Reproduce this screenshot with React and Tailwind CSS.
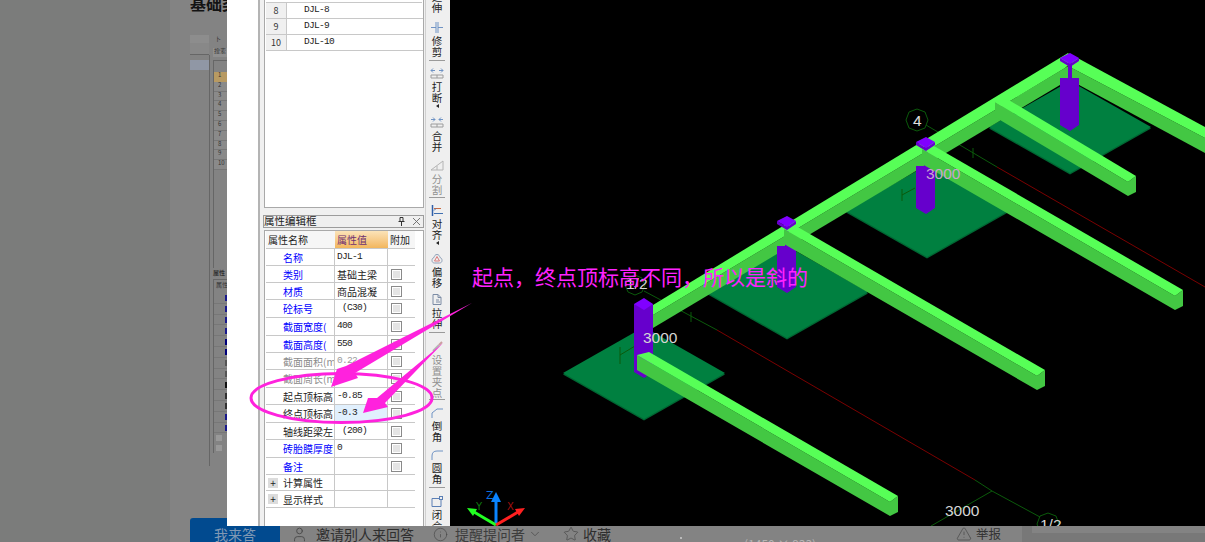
import { ChevronDown, Info, Star, TriangleAlert, User } from "lucide-react";

const MONO = "font-['Liberation_Mono',monospace] text-[9.5px] tracking-[-0.7px]";

const listRows = [
  { no: "8", name: "DJL-8" },
  { no: "9", name: "DJL-9" },
  { no: "10", name: "DJL-10" },
];

const propRows = [
  { h: "h-[17px]", label: "名称", color: "text-[#0000ff]", value: "DJL-1", mono: true },
  { h: "h-[17px]", label: "类别", color: "text-[#0000ff]", value: "基础主梁", check: true },
  { h: "h-[17px]", label: "材质", color: "text-[#0000ff]", value: "商品混凝", check: true },
  { h: "h-[18px]", label: "砼标号", color: "text-[#0000ff]", value: " (C30)", mono: true, check: true },
  { h: "h-[18px]", label: "截面宽度(", color: "text-[#0000ff]", value: "400", mono: true, check: true },
  { h: "h-[17px]", label: "截面高度(", color: "text-[#0000ff]", value: "550", mono: true, check: true },
  { h: "h-[17px]", label: "截面面积(m", color: "text-[#8c8c8c]", value: "0.22", mono: true, gray: true, check: true },
  { h: "h-[18px]", label: "截面周长(m", color: "text-[#8c8c8c]", value: "1.9", mono: true, gray: true, check: true },
  { h: "h-[17px]", label: "起点顶标高", color: "text-[#222]", value: "-0.85", mono: true, check: true },
  { h: "h-[18px]", label: "终点顶标高", color: "text-[#222]", value: "-0.3", mono: true, active: true, check: true },
  { h: "h-[17px]", label: "轴线距梁左", color: "text-[#222]", value: " (200)", mono: true, check: true },
  { h: "h-[18px]", label: "砖胎膜厚度", color: "text-[#0000ff]", value: "0", mono: true, check: true },
  { h: "h-[17px]", label: "备注", color: "text-[#0000ff]", value: "", check: true },
  { h: "h-[16px]", label: "计算属性", color: "text-[#222]", value: "", plus: true },
  { h: "h-[17px]", label: "显示样式", color: "text-[#222]", value: "", plus: true },
];

const thumbMarks = [
  "#1a1a8c", "#1a1a8c", "#1a1a8c", "#1a1a8c", "#00007a", "#00007a", "#555", "#555",
  "#111", "#333", "#333", "#1a1a8c", "#1a1a8c",
];

function Icon({ children, gray }) {
  return (
    <svg
      viewBox="0 0 14 11"
      className={`w-[14px] h-[11px] shrink-0 ${gray ? "text-[#b4b4b4]" : "text-[#6f93c4]"}`}
      fill="none"
      stroke="currentColor"
      strokeWidth="1"
    >
      {children}
    </svg>
  );
}

function Tool({ chars, icon, gray, arrow, mt }) {
  return (
    <div className={`flex flex-col items-center shrink-0 ${mt}`}>
      {icon && <Icon gray={gray}>{icon}</Icon>}
      <div className={`mt-[2px] flex flex-col items-center text-[10.5px] leading-[11px] ${gray ? "text-[#8f8f8f]" : "text-[#222]"}`}>
        {chars.split("").map((c, i) => (
          <span key={i}>{c}</span>
        ))}
      </div>
      {arrow && <span className="mt-[1px] w-0 h-0 border-y-[2px] border-y-transparent border-r-[3px] border-r-[#222]" />}
    </div>
  );
}

function Divider({ mt }) {
  return <div className={`w-[16px] h-px bg-[#9a9a9a] shrink-0 ${mt}`} />;
}

function Toolbar() {
  return (
    <div className="w-[25px] h-full bg-[#efefef] border-l border-[#d0d0d0] pr-[2px] flex flex-col items-center overflow-hidden shrink-0">
      <div className="-mt-[9px] flex flex-col items-center text-[10.5px] leading-[11px] text-[#222] shrink-0">
        <span>延</span>
        <span>伸</span>
      </div>
      <Tool
        chars="修剪"
        mt="mt-[9px]"
        icon={<><path d="M6 0v11M8 0v11" /><path d="M1 5.500h5M8 5.500h5" /></>}
      />
      <Divider mt="mt-[3px]" />
      <Tool
        chars="打断"
        arrow
        mt="mt-[7px]"
        icon={<><path d="M5 2.500H1M3 .5l-2 2 2 2M9 2.500h4M11 .5l2 2-2 2" /><path d="M1 7h12v3H1zM7 7v3" stroke="#9c9c9c" /></>}
      />
      <Tool
        chars="合并"
        mt="mt-[9px]"
        icon={<><path d="M1 2.500h4M3 .5l2 2-2 2M13 2.500H9M11 .5l-2 2 2 2" /><path d="M1 7h12v3H1zM7 7v3" stroke="#9c9c9c" /></>}
      />
      <Tool
        chars="分割"
        gray
        mt="mt-[8px]"
        icon={<><path d="M1 10h12v-9L1 10z" /><path d="M7 10V6" /></>}
      />
      <Divider mt="mt-[2px]" />
      <Tool
        chars="对齐"
        arrow
        mt="mt-[7px]"
        icon={<><path d="M2.500 0v11" stroke="#2f5fa8" strokeWidth="1.500" /><path d="M4 3.500h7" stroke="#c9693f" /><path d="M4 5.500l2-2M4 8.500h9" stroke="#3f6fb0" /></>}
      />
      <Tool
        chars="偏移"
        mt="mt-[8px]"
        icon={<><path d="M7 1.500c2 0 2.500 1.500 3 3 1.500.5 2 1.500 2 3 0 1.500-1 2.500-2.500 2.500h-5C3 10 2 9 2 7.500c0-1.500.5-2.500 2-3 .5-1.500 1-3 3-3z" stroke="#8fa0b8" /><path d="M7 3.500l2.500 4.500h-5z" stroke="#d97a7a" /></>}
      />
      <Tool
        chars="拉伸"
        mt="mt-[6px]"
        icon={<><path d="M3 .5h5l3 3v7H3z" stroke="#7c8ca5" /><path d="M8 .5v3h3M6 6h3M6 8h4" stroke="#7c8ca5" /></>}
      />
      <Divider mt="mt-[3px]" />
      <Tool
        chars="设置夹点"
        gray
        mt="mt-[8px]"
        icon={<><path d="M3 10l6-6" strokeWidth="2" /><path d="M9 4l3-3" stroke="#c9a0a0" strokeWidth="2" /></>}
      />
      <Divider mt="mt-[1px]" />
      <Tool chars="倒角" mt="mt-[7px]" icon={<path d="M2 11V6l5-4h6" />} />
      <Tool chars="圆角" mt="mt-[7px]" icon={<path d="M2 11V7q0-5 5-5h6" />} />
      <Divider mt="mt-[3px]" />
      <Tool
        chars="闭合"
        mt="mt-[8px]"
        icon={<><path d="M2 2.500h8M2 2.500v8h9V4" stroke="#5b7fb5" /><rect x="9.500" y=".5" width="3" height="3" stroke="#5b7fb5" /></>}
      />
    </div>
  );
}

function ListPanel() {
  return (
    <div className="h-[208px] mr-px border-x border-b border-[#a9a9a9] bg-white pl-[1px] shrink-0 overflow-hidden">
      <div className="h-[2px] border-b border-[#c8c8c8] mr-px box-content" />
      {listRows.map((row) => (
        <div key={row.no} className="h-[16px] flex items-stretch border-b border-[#c8c8c8]">
          <div className="w-[21px] bg-[#f0f0f0] border-r border-[#c8c8c8] flex items-center justify-center text-[#333] text-[9px]">
            {row.no}
          </div>
          <div className={`pl-[17px] flex items-center text-[#222] ${MONO}`}>{row.name}</div>
        </div>
      ))}
    </div>
  );
}

function PropertyTable() {
  return (
    <div className="mt-[2px] flex-1 mr-px border-x border-t border-[#a9a9a9] bg-white pl-[1px]">
      <div className="w-[149px] flex h-[18px] border-b border-[#c8c8c8] text-[10px] text-[#222]">
        <div className="w-[69px] bg-[#f6f6f6] pl-[2px] flex items-center">属性名称</div>
        <div className="w-[53px] bg-gradient-to-b from-[#fbe3b8] to-[#f2b65c] text-[#6d2f73] pl-[2px] flex items-center">属性值</div>
        <div className="w-[27px] bg-[#f6f6f6] pl-[2px] flex items-center">附加</div>
      </div>
      {propRows.map((row) => (
        <div key={row.label} className={`w-[149px] flex border-b border-[#c8c8c8] text-[10px] ${row.h}`}>
          <div className={`w-[69px] border-r border-[#c8c8c8] flex items-center overflow-hidden whitespace-nowrap ${row.color} ${row.plus ? "pl-[2px]" : "pl-[17px]"}`}>
            {row.plus && (
              <span className="w-[10px] h-[10px] mr-[5px] bg-[#dcdcdc] flex items-center justify-center text-[#222] text-[10px] leading-none shrink-0">+</span>
            )}
            {row.label}
          </div>
          <div
            className={`w-[53px] border-r border-[#c8c8c8] pl-[2px] flex items-center whitespace-pre overflow-hidden ${row.mono ? MONO : ""} ${row.gray ? "text-[#9a9a9a]" : "text-[#222]"} ${row.active ? "bg-[#e1f0fd]" : ""}`}
          >
            {row.value}
          </div>
          <div className="w-[27px] flex items-center pl-[3px]">
            {row.check && <span className="w-[11px] h-[11px] border border-[#8a8a8a] bg-[#e4e4e4] ring-1 ring-inset ring-white" />}
          </div>
        </div>
      ))}
    </div>
  );
}

function EditorPane() {
  return (
    <div className="w-[167px] h-full bg-[#f0f0f0] border-l-2 border-[#b4b4b4] pl-[4px] flex flex-col shrink-0">
      <ListPanel />
      <div className="mt-[7px] -ml-px h-[13px] mr-px border border-[#9c9c9c] bg-[#efefef] flex items-center text-[10.5px] text-[#222] shrink-0">
        <span className="flex-1 leading-none">属性编辑框</span>
        <svg viewBox="0 0 7 9" className="w-[7px] h-[9px] mr-[8px]" fill="none" stroke="#333" strokeWidth="1">
          <path d="M2 .5h3v4H2zM.5 4.500h6M3.500 4.500V9" />
        </svg>
        <svg viewBox="0 0 7 7" className="w-[7px] h-[7px] mr-[3px]" fill="none" stroke="#666" strokeWidth="0.9">
          <path d="M0 0l7 7M7 0L0 7" />
        </svg>
      </div>
      <PropertyTable />
    </div>
  );
}

function Beam({ x, y, dx, dy }) {
  // 梁的顶面和侧面，起点是靠轴网一端
  const top = `${x},${y} ${x + 12},${y - 3} ${x + dx + 8},${y + dy - 6} ${x + dx},${y + dy}`;
  const side = `${x},${y} ${x + dx},${y + dy} ${x + dx + 8},${y + dy - 6} ${x + dx + 8},${y + dy + 10} ${x + dx},${y + dy + 14} ${x},${y + 15}`;
  return (
    <g>
      <polygon points={side} fill="#43c743" />
      <polygon points={top} fill="#57ff57" />
    </g>
  );
}

function Footing({ cx, cy }) {
  const pts = (d) => `${cx - 81},${cy + d} ${cx},${cy - 46 + d} ${cx + 81},${cy + d} ${cx},${cy + 46 + d}`;
  return (
    <g>
      <polygon points={pts(1.5)} fill="#006633" />
      <polygon points={pts(0)} fill="#008040" />
    </g>
  );
}

function Column({ x, capTop, neckEnd, bodyEnd }) {
  return (
    <g>
      <polygon
        points={`${x - 10},${neckEnd} ${x + 9},${neckEnd} ${x + 9},${bodyEnd} ${x},${bodyEnd + 6} ${x - 10},${bodyEnd}`}
        fill="#6600cc"
      />
      <rect x={x - 2} y={capTop + 8} width="4" height={neckEnd - capTop - 8} fill="#6600cc" />
    </g>
  );
}

function Cap({ x, y }) {
  return (
    <g>
      <polygon points={`${x - 10},${y + 5} ${x},${y + 11} ${x + 9},${y + 5} ${x + 9},${y + 8} ${x},${y + 14} ${x - 10},${y + 8}`} fill="#6600cc" />
      <polygon points={`${x - 10},${y + 5} ${x},${y} ${x + 9},${y + 5} ${x},${y + 11}`} fill="#8000ff" />
    </g>
  );
}

function CadCanvas() {
  return (
    <div className="flex-1 h-full bg-black overflow-hidden">
      <svg viewBox="450 0 755 526" className="w-full h-full block">
        {/* 独立基础 */}
        <Footing cx={644} cy={373} />
        <Footing cx={787} cy={292} />
        <Footing cx={927} cy={211} />
        <Footing cx={1070} cy={127} />

        {/* 轴线 */}
        <g fill="none" strokeWidth="1">
          <path d="M926 125L997 167" stroke="#0b5a0b" />
          <path d="M997 167L1205 287" stroke="#7a0000" />
          <path d="M644 291L717 330" stroke="#0b5a0b" />
          <path d="M717 330L975 480" stroke="#7a0000" />
          <path d="M975 480L992 491L1040 517M992 491L931 526" stroke="#0b5a0b" />
          <path d="M691 312V322M620 347V364M620 355L640 343M902 189V201M902 195L915 188M973 148V158" stroke="#0b5a0b" />
          <polygon points="917,109 925,112 928,120 925,128 917,131 909,128 906,120 909,112" stroke="#0b5a0b" />
          <polygon points="635,275 642,278 645,285 642,292 635,295 628,292 625,285 628,278" stroke="#0b5a0b" />
          <polygon points="1048,513 1056,516 1059,524 1056,532 1048,535 1040,532 1037,524 1040,516" stroke="#0b5a0b" />
        </g>

        {/* 主梁 */}
        <polygon points="653,315 1070,65 1070,79 653,328" fill="#43c743" />
        <polygon points="653,305 1068,53 1074,60 1065,68 653,315" fill="#57ff57" />
        <polygon points="1068,66 1205,138 1205,153 1068,79" fill="#43c743" />
        <polygon points="1072,55 1205,127 1205,138 1068,66" fill="#57ff57" />

        {/* 柱 */}
        <Column x={644} capTop={298} neckEnd={304} bodyEnd={372} />
        <polygon points="634,304 644,298 653,304 644,310" fill="#8000ff" />
        <Column x={787} capTop={216} neckEnd={246} bodyEnd={287} />
        <Column x={926} capTop={137} neckEnd={166} bodyEnd={208} />
        <Column x={1070} capTop={53} neckEnd={78} bodyEnd={125} />

        {/* 次梁 */}
        <Beam x={637} y={355} dx={253} dy={147} />
        <Beam x={784} y={229} dx={253} dy={147} />
        <Beam x={922} y={149} dx={253} dy={147} />
        <Beam x={995} y={102} dx={133} dy={80} />

        <Cap x={787} y={216} />
        <Cap x={926} y={137} />
        <Cap x={1070} y={53} />

        {/* 标注 */}
        <g className="font-['Liberation_Sans',sans-serif]" fontSize="15.5">
          <text x="643" y="343" fill="#d6d6d6">3000</text>
          <text x="926" y="179" fill="#c9a6d0">3000</text>
          <text x="945" y="516" fill="#d6d6d6">3000</text>
          <text x="913" y="126" fill="#e0e0e0">4</text>
          <text x="626" y="289" fill="#d6d6d6">1/2</text>
          <text x="1040" y="530" fill="#d6d6d6">1/2</text>
        </g>

        {/* 坐标轴 */}
        <g strokeWidth="3" fill="none">
          <path d="M496 525V500" stroke="#0a84ff" />
          <path d="M496 525L474 512" stroke="#22ff22" />
          <path d="M496 525L518 512" stroke="#ff2020" />
        </g>
        <polygon points="496,492 491,502 501,502" fill="#0a84ff" />
        <polygon points="467,508 477,509 473,516" fill="#22ff22" />
        <polygon points="525,508 515,509 519,516" fill="#ff2020" />
        <g className="font-['DejaVu_Sans',sans-serif]" fontSize="10">
          <text x="486" y="499" fill="#0a6fe0" fontSize="11">Z</text>
          <text x="476" y="510" fill="#0f7a0f">Y</text>
          <text x="507" y="510" fill="#a01010">X</text>
        </g>
      </svg>
    </div>
  );
}

function Thumbnail() {
  return (
    <div className="h-[431px] flex text-[6px] leading-none text-[#333] overflow-hidden shrink-0">
      <div className="w-[19px] shrink-0">
        <div className="h-[8px] bg-[#8d8d8d]" />
        <div className="h-[12px] bg-[#888] border-b border-[#666]" />
        <div className="h-[5px]" />
        <div className="h-[10px] bg-[#9097a5]" />
      </div>
      <div className="w-px bg-[#666] mt-[20px] shrink-0" />
      <div className="w-[3px] shrink-0" />
      <div className="flex-1 min-w-0">
        <div className="h-[13px] pl-[2px] pt-[1px]">卜</div>
        <div className="h-[9px] bg-[#8f8f8f] pl-[1px] whitespace-nowrap">搜索</div>
        <div className="mt-[3px] h-[208px] border-l border-t border-[#666] overflow-hidden">
          <div className="h-[11px]" />
          <div className="h-[9.800px] bg-[#b89a62] pl-[4px]">1</div>
          {["2", "3", "4", "5", "6", "7", "8", "9", "10"].map((n) => (
            <div key={n} className="h-[9.800px] bg-[#8a8a8a] border-b border-[#777] pl-[4px]">{n}</div>
          ))}
        </div>
        <div className="mt-[2px] h-[7px] font-bold whitespace-nowrap">属性</div>
        <div className="mt-[2px] border-l border-t border-[#666] pt-[2px]">
          <div className="h-[11px] pl-[2px] whitespace-nowrap">属性</div>
          {thumbMarks.map((c, i) => (
            <div key={i} className="h-[10.800px] border-b border-[#777] flex items-center pl-[11px] pt-px">
              <span className="w-[3px] h-[6px] shrink-0" style={{ backgroundColor: c }} />
            </div>
          ))}
          <div className="h-[10px] flex items-center pl-[2px]"><span className="w-[6px] h-[6px] bg-[#999]" /></div>
          <div className="h-[10px] flex items-center pl-[2px]"><span className="w-[6px] h-[6px] bg-[#999]" /></div>
        </div>
      </div>
    </div>
  );
}

function ActionBar() {
  return (
    <div className="h-[24px] flex items-end shrink-0 text-[14px] text-[#2e2e2e] whitespace-nowrap">
      <div className="w-[90px] h-[24px] pt-[9px] bg-[#014a8f] rounded-t-[3px] flex items-center justify-center text-[#8098b4] shrink-0">我来答</div>
      <div className="h-[16px] flex items-center">
        <User size={17} strokeWidth={1.2} className="ml-[11px] text-[#444] shrink-0" />
        <span className="ml-[8px]">邀请别人来回答</span>
        <Info size={15} strokeWidth={1} className="ml-[19px] text-[#444] shrink-0" />
        <span className="ml-[7px] text-[#3d3d3d]">提醒提问者</span>
        <ChevronDown size={14} strokeWidth={1.3} className="ml-[3px] text-[#4a4a4a] shrink-0" />
        <Star size={16} strokeWidth={1} className="ml-[21px] text-[#444] shrink-0" />
        <span className="ml-[4px]">收藏</span>
        <span className="ml-[69px] w-[2px] h-[2px] mt-[8px] bg-[#bbb] shrink-0" />
        <span className="ml-[62px] mt-[20px] text-[12px] text-[#b5b5b5]">(1450 × 833)</span>
        <TriangleAlert size={16} strokeWidth={1} className="ml-[140px] text-[#444] shrink-0" />
        <span className="ml-[4px] text-[12.500px] text-[#333]">举报</span>
      </div>
    </div>
  );
}

function Annotations() {
  return (
    <svg viewBox="0 0 1205 542" className="absolute inset-0 w-full h-full pointer-events-none">
      <ellipse cx="341.500" cy="398" rx="90.500" ry="24.500" fill="none" stroke="#ff22dd" strokeWidth="3" />
      <polygon points="472,303 346,366 337,369 331,387 358,378 355,373" fill="#ff22dd" />
      <polygon points="443,343 377,398 368,398 363,413 388,407 385,403" fill="#ff22dd" />
      <text x="472" y="285" fontSize="21" fill="#ff22ff" className="font-['Noto_Sans_CJK_SC',sans-serif]">
        起点，终点顶标高不同，所以是斜的
      </text>
    </svg>
  );
}

export default function App() {
  return (
    <div className="relative w-[1205px] h-[542px] overflow-hidden flex bg-[#7b7c7b] font-['Noto_Sans_CJK_SC',sans-serif]">
      <div className="w-[170px] shrink-0" />
      <div className="w-[852px] bg-[#838383] pl-[20px] flex flex-col shrink-0">
        <div className="h-[35px] shrink-0 overflow-hidden">
          <div className="-mt-[9px] text-[16px] leading-[24px] font-bold text-[#141414] whitespace-nowrap">基础类</div>
        </div>
        <Thumbnail />
        <div className="h-[52px] shrink-0" />
        <ActionBar />
      </div>
      <div className="flex-1 bg-[#787878] pl-[10px]">
        <div className="h-[533px] bg-[#838383]" />
      </div>

      {/* 预览大图盖在问答页面上 */}
      <div className="absolute top-0 left-[227px] right-0 h-[526px] flex bg-white">
        <div className="w-[31px] h-full shrink-0" />
        <EditorPane />
        <Toolbar />
        <CadCanvas />
      </div>

      <Annotations />
    </div>
  );
}
